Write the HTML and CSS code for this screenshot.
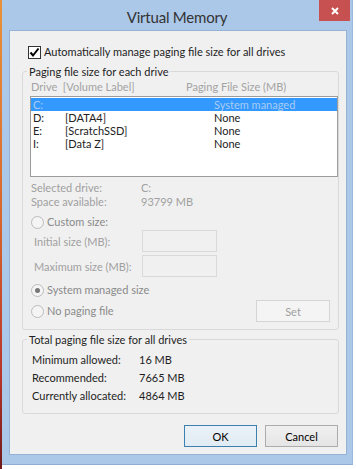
FILE: index.html
```html
<!DOCTYPE html>
<html lang="en">
<head>
    <meta charset="UTF-8">
    <meta name="viewport" content="width=device-width, initial-scale=1.0">
    <title>Virtual Memory</title>
    <link rel="stylesheet" href="styles.css">
</head>
<body>
    <div class="desktop-edge"></div>

    <div class="window">
        <div class="titlebar">
            <span></span>
            <div class="title">Virtual Memory</div>
            <button class="close" aria-label="Close">
                <svg width="8" height="8" viewBox="0 0 8 8">
                    <path d="M1 1 L7 7 M7 1 L1 7" stroke="#fff" stroke-width="2" fill="none"/>
                </svg>
            </button>
        </div>

        <div class="client">
            <label class="check-row">
                <span class="checkbox">
                    <svg width="11" height="11" viewBox="0 0 11 11">
                        <path d="M1.5 5.5 L4 8.5 L9.5 1.5" stroke="#000" stroke-width="2" fill="none"/>
                    </svg>
                </span>
                Automatically manage paging file size for all drives
            </label>

            <fieldset class="group">
                <legend>Paging file size for each drive</legend>
                <div class="list-header">
                    <span>Drive&nbsp; [Volume Label]</span>
                    <span>Paging File Size (MB)</span>
                </div>
                <div class="drive-list">
                    <div class="drive selected"><span>C:</span><span></span><span>System managed</span></div>
                    <div class="drive"><span>D:</span><span>[DATA4]</span><span>None</span></div>
                    <div class="drive"><span>E:</span><span>[ScratchSSD]</span><span>None</span></div>
                    <div class="drive"><span>I:</span><span>[Data Z]</span><span>None</span></div>
                </div>

                <div class="info-row first"><span>Selected drive:</span><span>C:</span></div>
                <div class="info-row"><span>Space available:</span><span>93799 MB</span></div>

                <div class="radio-row"><span class="radio"></span>Custom size:</div>
                <div class="size-row first"><span>Initial size (MB):</span><span class="textbox"></span></div>
                <div class="size-row"><span>Maximum size (MB):</span><span class="textbox"></span></div>
                <div class="radio-row"><span class="radio checked"></span>System managed size</div>
                <div class="radio-row set-row">
                    <span class="radio"></span>No paging file
                    <button class="btn set" disabled>Set</button>
                </div>
            </fieldset>

            <fieldset class="group totals">
                <legend>Total paging file size for all drives</legend>
                <div class="total-row first"><span>Minimum allowed:</span><span>16 MB</span></div>
                <div class="total-row"><span>Recommended:</span><span>7665 MB</span></div>
                <div class="total-row"><span>Currently allocated:</span><span>4864 MB</span></div>
            </fieldset>

            <div class="actions">
                <button class="btn default">OK</button>
                <button class="btn">Cancel</button>
            </div>
        </div>
    </div>
</body>
</html>
```

FILE: styles.css
```css
body {
    margin: 0;
    display: flex;
    height: 469px;
    overflow: hidden;
    background: #fff;
    font-family: Lato, "Noto Sans", sans-serif;
    font-size: 11px;
    color: #1e1e1e;
    white-space: nowrap;
}
.desktop-edge {
    width: 2px;
    background: linear-gradient(#e9923a, #d9682c 45%, #b8352a 80%, #6e1a1c);
}
.window {
    width: 351px;
    height: 465px;
    background: #abc8e8;
    box-sizing: border-box;
    border-right: 1px solid #9bb9dc;
    border-bottom: 1px solid #8fadd0;
}
.titlebar {
    display: grid;
    grid-template-columns: 1fr auto 1fr;
    height: 30px;
}
.title {
    font-size: 15px;
    letter-spacing: -0.2px;
    line-height: 28px;
    padding-top: 3px;
    color: #333;
}
.close {
    justify-self: end;
    align-self: start;
    width: 31px;
    height: 21px;
    margin-right: 2px;
    padding: 0;
    border: none;
    background: #c75050;
    display: flex;
    align-items: center;
    justify-content: center;
}
.client {
    margin-left: 7px;
    width: 338px;
    height: 425px;
    box-sizing: border-box;
    border: 1px solid #94b2d4;
    background: #f0f0f0;
    padding: 13px 7px 0 12px;
}
.check-row {
    display: flex;
    align-items: center;
    gap: 3px;
    height: 16px;
    line-height: 16px;
    margin-left: 6px;
}
.checkbox {
    width: 13px;
    height: 13px;
    box-sizing: border-box;
    border: 1px solid #333;
    background: #fff;
    display: flex;
    align-items: center;
    justify-content: center;
}
.group {
    margin: 4px 0 0;
    padding: 0 0 7px;
    min-width: 0;
    border: 1px solid #d9d9d9;
    border-radius: 3px;
}
.group legend {
    margin-left: 4px;
    padding: 0 2px;
    line-height: 15px;
}
.list-header {
    display: grid;
    grid-template-columns: 155px auto;
    margin-top: 1px;
    padding-left: 8px;
    line-height: 14px;
    color: #a3a3a3;
}
.drive-list {
    margin: 2px 0 0 7px;
    height: 81px;
    box-sizing: border-box;
    border: 1px solid #9c9c9c;
    background: #fff;
    padding-top: 1px;
}
.drive {
    display: grid;
    grid-template-columns: 32px 149px auto;
    padding-left: 2px;
    height: 13px;
    line-height: 13px;
    color: #222;
}
.drive.selected {
    background: #3399ff;
    color: #a9cbf2;
}
.info-row {
    display: grid;
    grid-template-columns: 110px auto;
    padding-left: 8px;
    line-height: 14px;
    color: #a0a0a0;
}
.info-row.first {
    margin-top: 4px;
}
.radio-row {
    display: flex;
    align-items: center;
    gap: 3px;
    margin-top: 6px;
    padding-left: 8px;
    height: 14px;
    line-height: 14px;
    color: #8a8a8a;
}
.radio {
    width: 13px;
    height: 13px;
    box-sizing: border-box;
    border: 1px solid #bcbcbc;
    border-radius: 50%;
    background: #f4f4f4;
    display: flex;
    align-items: center;
    justify-content: center;
}
.radio.checked::after {
    content: "";
    width: 5px;
    height: 5px;
    border-radius: 50%;
    background: #777;
}
.size-row {
    display: grid;
    grid-template-columns: 108px 75px;
    align-items: center;
    margin-top: 3px;
    padding-left: 11px;
    height: 22px;
    color: #a0a0a0;
}
.size-row.first {
    margin-top: 1px;
}
.textbox {
    height: 22px;
    box-sizing: border-box;
    border: 1px solid #d9d9d9;
    background: #f0f0f0;
}
.set-row {
    margin-top: 3px;
    height: 22px;
}
.btn {
    width: 73px;
    height: 22px;
    padding: 0;
    font-family: inherit;
    font-size: 11px;
    color: #000;
    border: 1px solid #acacac;
    background: linear-gradient(#f0f0f0, #e5e5e5);
}
.btn.set {
    width: 74px;
    margin-left: auto;
    margin-right: 8px;
    border-color: #d5d5d5;
    background: #f4f4f4;
    color: #a0a0a0;
}
.btn.default {
    border-color: #3c7fb1;
    background: linear-gradient(#eaf2f8, #e1ebf3);
}
.totals {
    margin-top: 2px;
    padding-bottom: 8px;
}
.total-row {
    display: grid;
    grid-template-columns: 107px auto;
    padding-left: 9px;
    line-height: 18px;
}
.total-row.first {
    margin-top: 4px;
}
.actions {
    display: flex;
    justify-content: flex-end;
    gap: 8px;
    margin-top: 11px;
    padding-right: 1px;
}
```
